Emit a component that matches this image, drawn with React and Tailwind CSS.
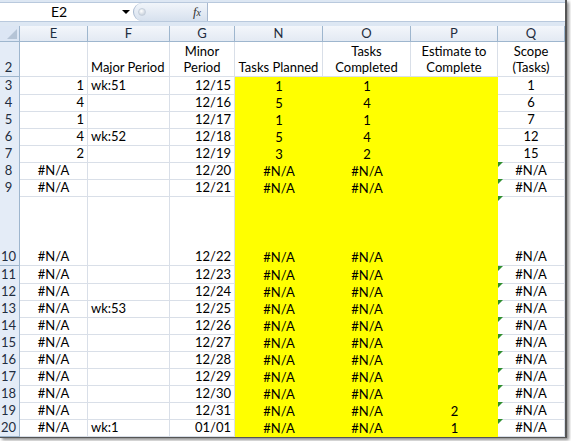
const rows = [
  { n: 3, e: "1", f: "wk:51", g: "12/15", pn: "1", oc: "1", p: "", q: "1" },
  { n: 4, e: "4", f: "", g: "12/16", pn: "5", oc: "4", p: "", q: "6" },
  { n: 5, e: "1", f: "", g: "12/17", pn: "1", oc: "1", p: "", q: "7" },
  { n: 6, e: "4", f: "wk:52", g: "12/18", pn: "5", oc: "4", p: "", q: "12" },
  { n: 7, e: "2", f: "", g: "12/19", pn: "3", oc: "2", p: "", q: "15" },
  { n: 8, e: "#N/A", f: "", g: "12/20", pn: "#N/A", oc: "#N/A", p: "", q: "#N/A", tri: true },
  { n: 9, e: "#N/A", f: "", g: "12/21", pn: "#N/A", oc: "#N/A", p: "", q: "#N/A", tri: true },
  { n: 10, e: "#N/A", f: "", g: "12/22", pn: "#N/A", oc: "#N/A", p: "", q: "#N/A", tri: true, tall: true },
  { n: 11, e: "#N/A", f: "", g: "12/23", pn: "#N/A", oc: "#N/A", p: "", q: "#N/A", tri: true },
  { n: 12, e: "#N/A", f: "", g: "12/24", pn: "#N/A", oc: "#N/A", p: "", q: "#N/A", tri: true },
  { n: 13, e: "#N/A", f: "wk:53", g: "12/25", pn: "#N/A", oc: "#N/A", p: "", q: "#N/A", tri: true },
  { n: 14, e: "#N/A", f: "", g: "12/26", pn: "#N/A", oc: "#N/A", p: "", q: "#N/A", tri: true },
  { n: 15, e: "#N/A", f: "", g: "12/27", pn: "#N/A", oc: "#N/A", p: "", q: "#N/A", tri: true },
  { n: 16, e: "#N/A", f: "", g: "12/28", pn: "#N/A", oc: "#N/A", p: "", q: "#N/A", tri: true },
  { n: 17, e: "#N/A", f: "", g: "12/29", pn: "#N/A", oc: "#N/A", p: "", q: "#N/A", tri: true },
  { n: 18, e: "#N/A", f: "", g: "12/30", pn: "#N/A", oc: "#N/A", p: "", q: "#N/A", tri: true },
  { n: 19, e: "#N/A", f: "", g: "12/31", pn: "#N/A", oc: "#N/A", p: "2", q: "#N/A", tri: true },
  { n: 20, e: "#N/A", f: "wk:1", g: "01/01", pn: "#N/A", oc: "#N/A", p: "1", q: "#N/A", tri: true },
];

const grid = "grid grid-cols-[20px_68px_82px_65px_88px_88px_87px_67px]";
const cell = "flex items-end border-r border-b border-[#d9dfe8] leading-[16px] pb-[1px]";
const yellow = "flex items-end justify-center bg-[#ffff00] leading-[16px] pb-[1px]";

const Triangle = () => (
  <span className="absolute left-0 top-0 w-0 h-0 border-t-[5px] border-t-[#2f8f2f] border-r-[5px] border-r-transparent" />
);

const DataRow = ({ r }) => {
  const isNA = r.e === "#N/A";
  return (
    <div className={`${grid} ${r.tall ? "h-[70px]" : "h-[17px]"}`}>
      <div className="flex items-end justify-center pr-[2px] bg-[#e4ecf7] border-r border-b border-[#9eb6ce] text-[#1f2d40] leading-[16px] pb-[1px]">
        {r.n}
      </div>
      <div className={`${cell} ${isNA ? "justify-center" : "justify-end pr-[3px]"}`}>{r.e}</div>
      <div className={`${cell} justify-start pl-[3px]`}>{r.f}</div>
      <div className={`${cell} justify-end pr-[3px]`}>{r.g}</div>
      <div className={yellow}>{r.pn}</div>
      <div className={yellow}>{r.oc}</div>
      <div className={yellow}>{r.p}</div>
      <div className={`${cell} justify-center relative`}>
        {r.tri && <Triangle />}
        {r.q}
      </div>
    </div>
  );
};

export default function App() {
  return (
    <div
      className="w-[571px] h-[441px] bg-white overflow-hidden text-[13px] text-black"
      style={{ fontFamily: "Lato, 'Liberation Sans', sans-serif" }}
    >
      <div className="w-[567px] border-r-2 border-b-2 border-[#555] shadow-[2px_2px_3px_rgba(0,0,0,0.45)]">
        {/* formula bar */}
        <div className="h-[26px] bg-[#dde7f3] pt-[2px]">
          <div className="flex h-[20px] border-t border-b border-[#b9c9dd] bg-white">
            <div className="w-[133px] flex items-center relative">
              <span className="w-[118px] text-center leading-none text-[14px]">E2</span>
              <span className="absolute left-[122px] top-[7px] w-0 h-0 border-l-[4px] border-r-[4px] border-t-[4px] border-l-transparent border-r-transparent border-t-black" />
            </div>
            <div className="w-[74px] flex items-center justify-between rounded-l-full border-l border-[#a7b8cf] bg-[linear-gradient(#f1f5fa,#d7e1ee)] pl-[4px] pr-[6px]">
              <span className="w-[8px] h-[8px] rounded-full bg-[radial-gradient(circle_at_40%_35%,#ffffff,#b9c4d2)] border border-[#c5cfdb]" />
              <span className="text-[13px] italic text-[#333]" style={{ fontFamily: "'Liberation Serif', serif" }}>
                f<span className="text-[10px]">x</span>
              </span>
            </div>
            <div className="flex-1 border-l border-[#a7b8cf] bg-white" />
          </div>
        </div>

        {/* column headers */}
        <div className={`${grid} h-[16px] bg-[linear-gradient(#f3f6fb,#e2e9f3)] text-[#1f2d40]`}>
          <div className="relative border-r border-b border-[#9eb6ce] bg-[#dce6f4]">
            <span className="absolute right-[2px] bottom-[2px] w-0 h-0 border-l-[10px] border-l-transparent border-b-[10px] border-b-[#b5c4d6]" />
          </div>
          {["E", "F", "G", "N", "O", "P", "Q"].map((c) => (
            <div key={c} className="flex items-center justify-center border-r border-b border-[#9eb6ce] leading-none">
              {c}
            </div>
          ))}
        </div>

        {/* row 2 */}
        <div className={`${grid} h-[35px]`}>
          <div className="flex items-end justify-center pr-[2px] bg-[#e4ecf7] border-r border-b border-[#9eb6ce] text-[#1f2d40] leading-[16px] pb-[1px]">
            2
          </div>
          <div className={cell}></div>
          <div className={`${cell} justify-start pl-[3px]`}>Major Period</div>
          <div className={`${cell} justify-center text-center`}>Minor<br />Period</div>
          <div className={`${cell} justify-center text-center`}>Tasks Planned</div>
          <div className={`${cell} justify-center text-center`}>Tasks<br />Completed</div>
          <div className={`${cell} justify-center text-center`}>Estimate to<br />Complete</div>
          <div className={`${cell} justify-center text-center`}>Scope<br />(Tasks)</div>
        </div>

        {rows.map((r) => (
          <DataRow key={r.n} r={r} />
        ))}
      </div>
    </div>
  );
}
